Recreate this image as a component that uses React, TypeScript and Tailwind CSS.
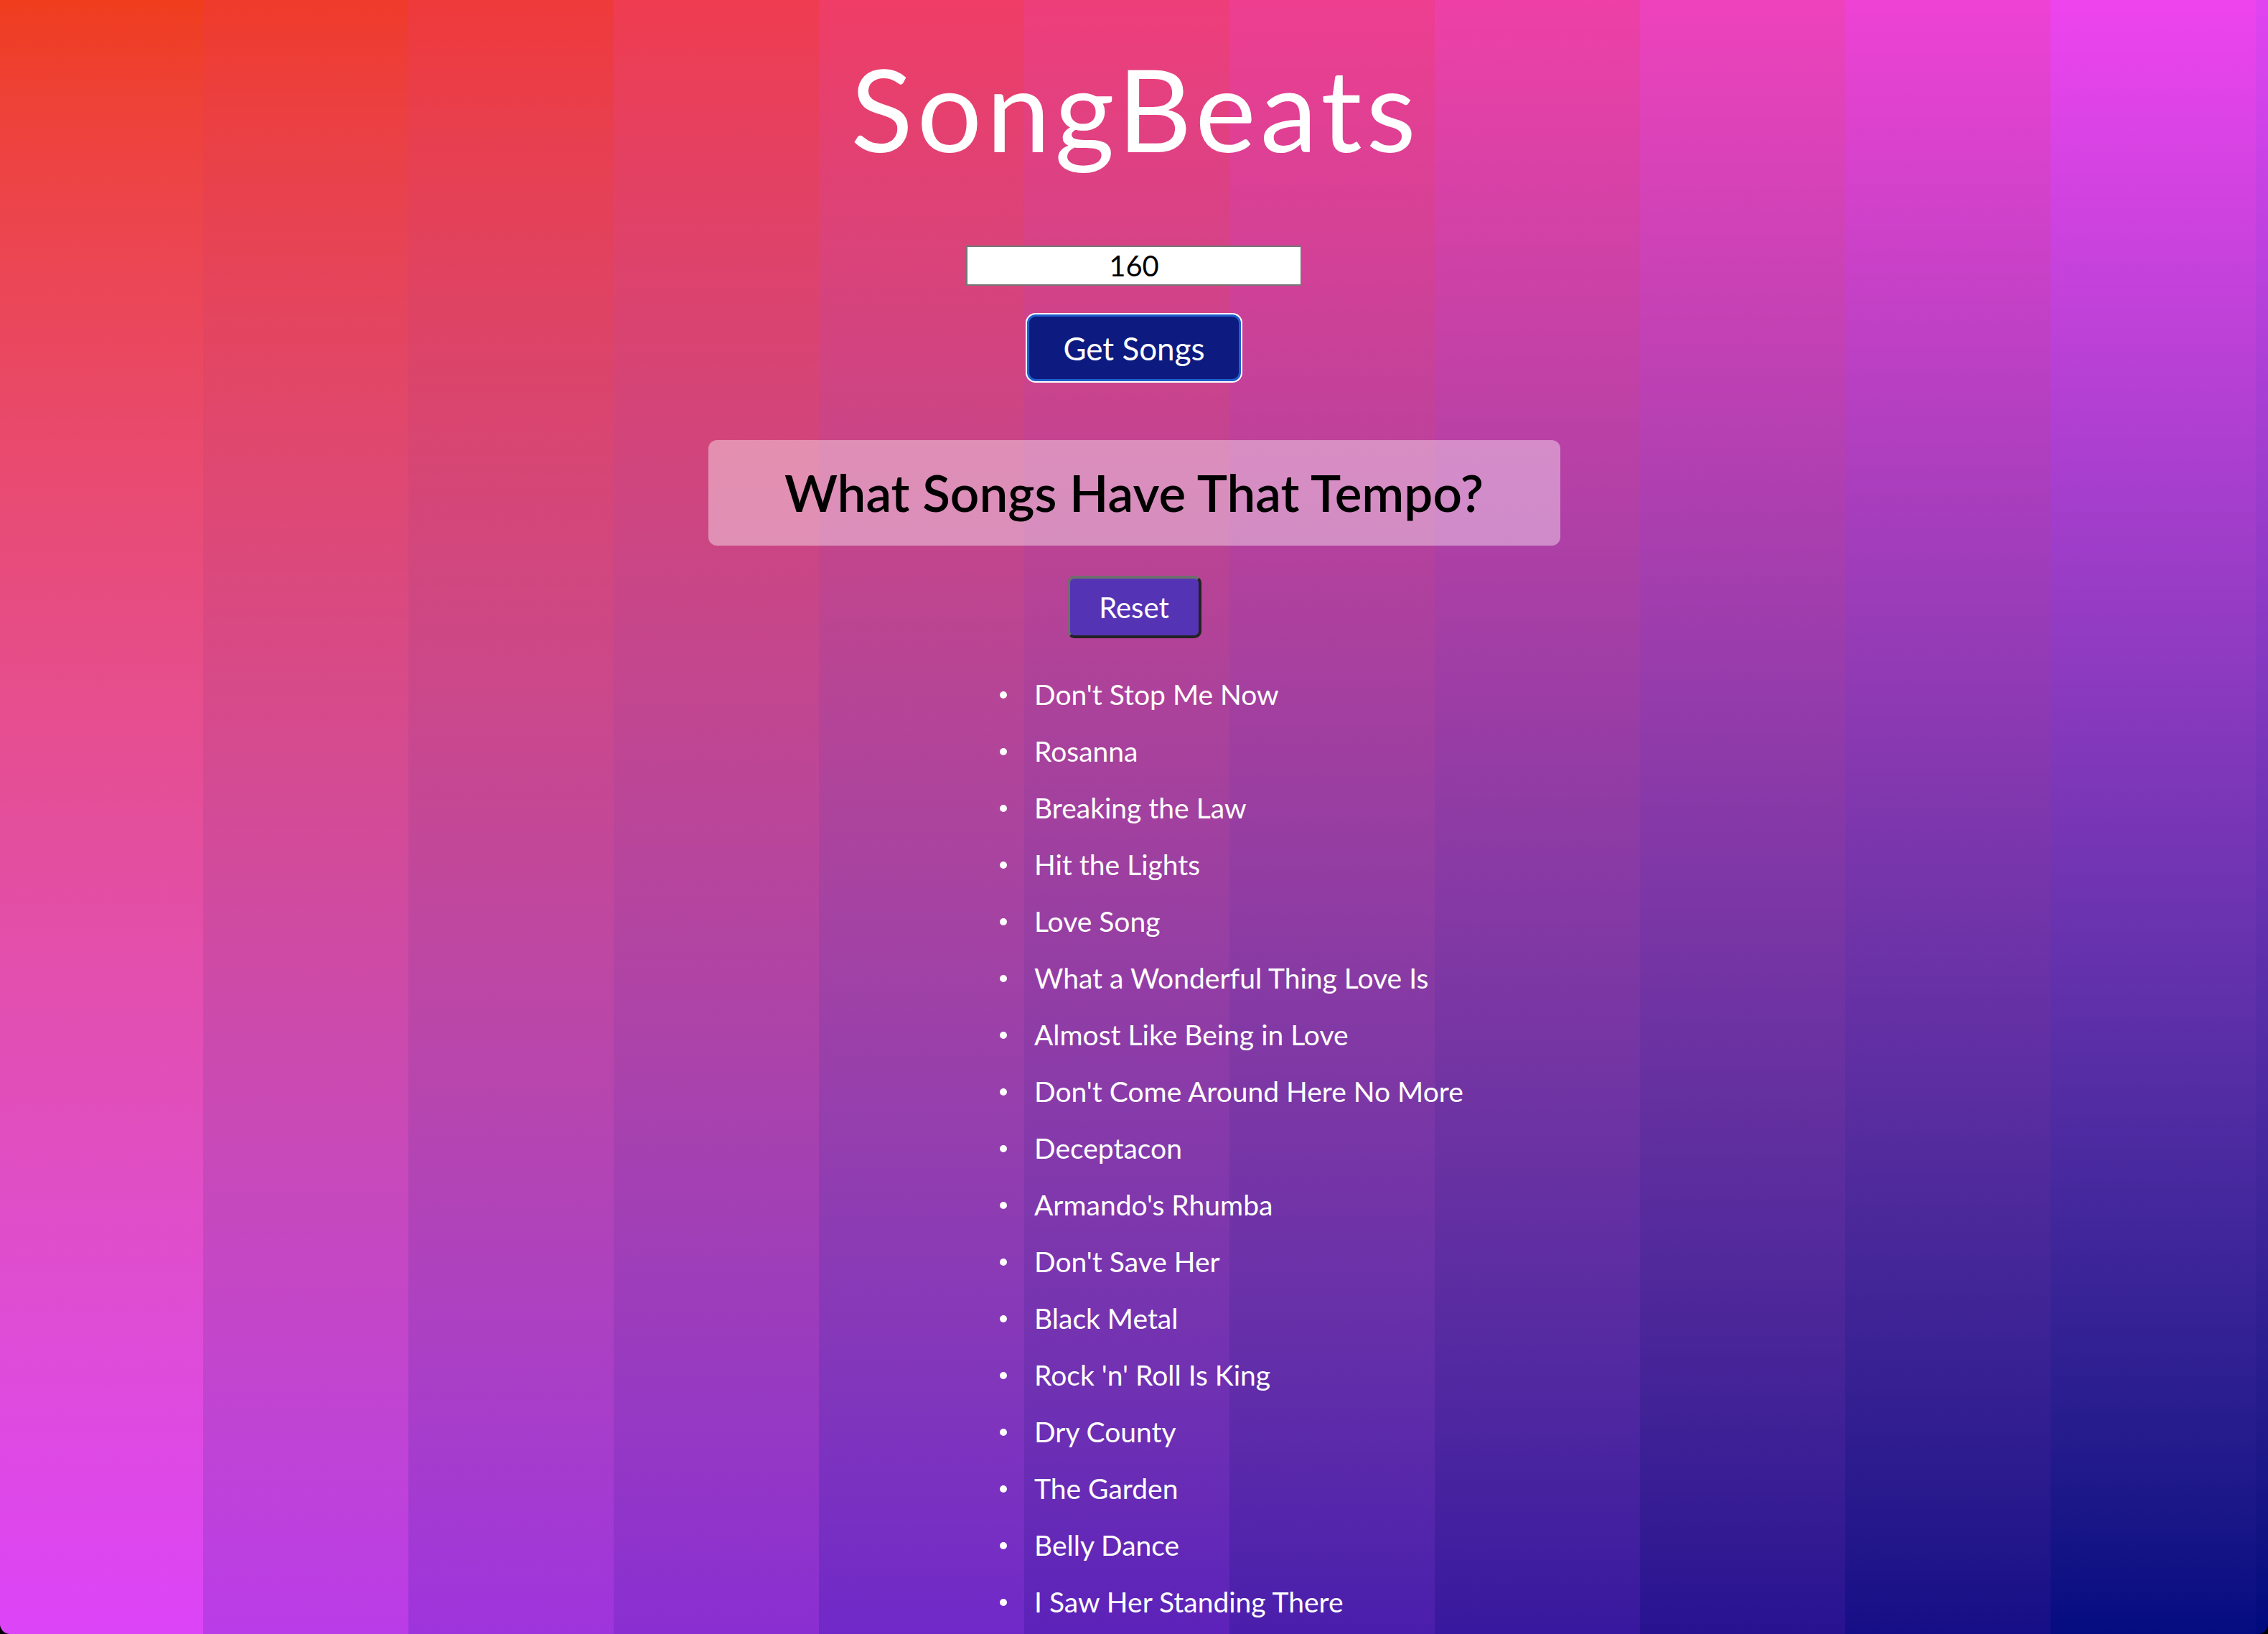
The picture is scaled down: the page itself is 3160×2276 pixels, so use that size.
import { useState } from 'react';

const songs = [
  "Don't Stop Me Now",
  'Rosanna',
  'Breaking the Law',
  'Hit the Lights',
  'Love Song',
  'What a Wonderful Thing Love Is',
  'Almost Like Being in Love',
  "Don't Come Around Here No More",
  'Deceptacon',
  "Armando's Rhumba",
  "Don't Save Her",
  'Black Metal',
  "Rock 'n' Roll Is King",
  'Dry County',
  'The Garden',
  'Belly Dance',
  'I Saw Her Standing There',
];

// background stripes, each one a vertical gradient
function Stripes() {
  return (
    <div className="absolute inset-0 flex">
      <div className="w-[283px] h-full bg-linear-to-b from-[#ef3d1c] to-[#dc44f8]" />
      <div className="w-[286px] h-full bg-linear-to-b from-[#ef3b2a] to-[#ba3ce8]" />
      <div className="w-[286px] h-full bg-linear-to-b from-[#ef3a3a] to-[#9e34dc]" />
      <div className="w-[286px] h-full bg-linear-to-b from-[#ef3c50] to-[#8a2ed2]" />
      <div className="w-[286px] h-full bg-linear-to-b from-[#ef3d66] to-[#7028c8]" />
      <div className="w-[286px] h-full bg-linear-to-b from-[#ee3e7a] to-[#5c22ba]" />
      <div className="w-[286px] h-full bg-linear-to-b from-[#ee3e90] to-[#4a1eac]" />
      <div className="w-[286px] h-full bg-linear-to-b from-[#ee40a6] to-[#38189e]" />
      <div className="w-[286px] h-full bg-linear-to-b from-[#ee42bc] to-[#281290]" />
      <div className="w-[286px] h-full bg-linear-to-b from-[#ee42d4] to-[#160e86]" />
      <div className="w-[286px] h-full bg-linear-to-b from-[#ee44ee] to-[#040c80]" />
      <div className="flex-1 h-full bg-linear-to-b from-[#e044f0] to-[#000a7c]" />
    </div>
  );
}

export default function App() {
  const [tempo, setTempo] = useState('160');
  const [list, setList] = useState(songs);

  return (
    <div className="min-h-screen bg-black">
      <div className="relative min-h-screen overflow-hidden rounded-b-[14px] font-['Lato','Noto_Sans',sans-serif]">
        <Stripes />
        <div className="relative flex flex-col items-center">
          <h1 className="mt-[70px] ml-[4px] text-[160px] leading-none text-white tracking-[6px]">
            SongBeats
          </h1>

          <input
            className="mt-[112px] w-[468px] h-[56px] border-2 border-[#767676] bg-white text-center text-[40px] text-black outline-none"
            value={tempo}
            onChange={(e) => setTempo(e.target.value)}
          />

          <button
            className="mt-[40px] w-[298px] h-[93px] rounded-[12px] border-[3px] border-[#1f5fcc] bg-[#0d1a80] text-[44px] text-white shadow-[0_0_0_2px_#ffffff]"
            onClick={() => setList(songs)}
          >
            Get Songs
          </button>

          <div className="mt-[82px] w-[1187px] h-[147px] rounded-[12px] bg-white/40 flex items-center justify-center">
            <h2 className="text-[71px] font-semibold text-black">What Songs Have That Tempo?</h2>
          </div>

          <button
            className="mt-[42px] w-[187px] h-[87px] rounded-[10px] border-4 border-t-[#6e6e6e] border-l-[#6e6e6e] border-b-[#222222] border-r-[#222222] bg-[#5533b5] text-[40px] text-white"
            onClick={() => setList([])}
          >
            Reset
          </button>

          <ul className="mt-[39px] w-[360px] whitespace-nowrap text-white">
            {list.map((song) => (
              <li key={song} className="flex items-center h-[79px] text-[39px]">
                <span className="ml-[-7px] mr-[38px] w-[10px] h-[10px] rounded-full bg-white shrink-0" />
                {song}
              </li>
            ))}
          </ul>
        </div>
      </div>
    </div>
  );
}
